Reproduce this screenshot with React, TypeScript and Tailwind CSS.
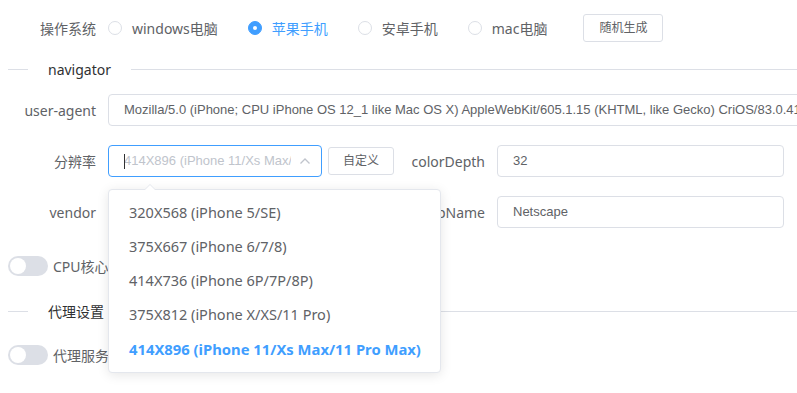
import React from "react";

const font = { fontFamily: '"Noto Sans", "Noto Sans CJK SC", sans-serif' };
const inputFont = { fontFamily: '"Liberation Sans", "Noto Sans CJK SC", sans-serif' };

function Radio({ label, checked }: { label: string; checked?: boolean }) {
  return (
    <label className="flex items-center mr-[30px] cursor-pointer">
      {checked ? (
        <span className="w-[14px] h-[14px] rounded-full bg-[#409eff] border border-[#409eff] flex items-center justify-center">
          <span className="w-[4px] h-[4px] rounded-full bg-white" />
        </span>
      ) : (
        <span className="w-[14px] h-[14px] rounded-full bg-white border border-[#dcdfe6]" />
      )}
      <span className={`ml-[10px] text-[14px] ${checked ? "text-[#409eff]" : "text-[#606266]"}`}>{label}</span>
    </label>
  );
}

function Divider({ title }: { title: string }) {
  return (
    <div className="flex items-center h-[20px]">
      <div className="w-[20px] h-px bg-[#dcdfe6]" />
      <span className="px-[20px] text-[14px] text-[#303133]">{title}</span>
      <div className="flex-1 h-px bg-[#dcdfe6]" />
    </div>
  );
}

function Switch({ label }: { label: string }) {
  return (
    <div className="flex items-center h-[32px]">
      <span className="relative w-[40px] h-[20px] rounded-full bg-[#dcdfe6]">
        <span className="absolute left-[2px] top-[2px] w-[16px] h-[16px] rounded-full bg-white" />
      </span>
      <span className="ml-[5px] text-[14px] text-[#606266] whitespace-nowrap">{label}</span>
    </div>
  );
}

const Label = ({ children }: { children: React.ReactNode }) => (
  <div className="w-[100px] shrink-0 pr-[12px] text-right text-[14px] text-[#606266] whitespace-nowrap">{children}</div>
);

const resolutions = [
  "320X568 (iPhone 5/SE)",
  "375X667 (iPhone 6/7/8)",
  "414X736 (iPhone 6P/7P/8P)",
  "375X812 (iPhone X/XS/11 Pro)",
  "414X896 (iPhone 11/Xs Max/11 Pro Max)",
];

export default function App() {
  return (
    <div className="relative w-[797px] h-[393px] overflow-hidden bg-white pl-[8px]" style={font}>
      {/* 操作系统 */}
      <div className="flex items-center h-[28px] mt-[14px]">
        <Label>操作系统</Label>
        <Radio label="windows电脑" />
        <Radio label="苹果手机" checked />
        <Radio label="安卓手机" />
        <Radio label="mac电脑" />
        <button className="ml-[6px] h-[28px] w-[80px] border border-[#dcdfe6] rounded-[3px] text-[12px] text-[#606266] bg-white">
          随机生成
        </button>
      </div>

      <div className="mt-[17px]">
        <Divider title="navigator" />
      </div>

      {/* user-agent */}
      <div className="flex items-center mt-[15px] h-[32px]">
        <Label>user-agent</Label>
        <div
          className="w-[820px] shrink-0 h-[32px] border border-[#dcdfe6] rounded-[4px] px-[15px] flex items-center text-[13px] text-[#606266] whitespace-nowrap overflow-hidden"
          style={inputFont}
        >
          Mozilla/5.0 (iPhone; CPU iPhone OS 12_1 like Mac OS X) AppleWebKit/605.1.15 (KHTML, like Gecko) CriOS/83.0.4103.88 Mobile/15E148 Safari/604.1
        </div>
      </div>

      {/* 分辨率 / colorDepth */}
      <div className="flex items-center mt-[19px] h-[32px]">
        <div className="w-[389px] shrink-0 flex items-center">
          <Label>分辨率</Label>
          <div
            className="relative w-[214px] h-[32px] border border-[#409eff] rounded-[4px] pl-[15px] pr-[30px] flex items-center text-[13px] text-[#c0c4cc] whitespace-nowrap overflow-hidden"
            style={inputFont}
          >
            <span className="absolute left-[15px] top-[8px] w-px h-[15px] bg-[#303133]" />
            <span className="overflow-hidden">414X896 (iPhone 11/Xs Max/11 Pro Max)</span>
            <svg className="absolute right-[10px] top-[11px]" width="12" height="8" viewBox="0 0 12 8">
              <polyline points="1.5,6.5 6,2 10.5,6.5" fill="none" stroke="#c0c4cc" strokeWidth="1.3" />
            </svg>
          </div>
          <button className="ml-[6px] h-[28px] w-[66px] border border-[#dcdfe6] rounded-[3px] text-[12px] text-[#606266] bg-white">
            自定义
          </button>
        </div>
        <Label>colorDepth</Label>
        <div
          className="w-[287px] h-[32px] border border-[#dcdfe6] rounded-[4px] px-[15px] flex items-center text-[13px] text-[#606266]"
          style={inputFont}
        >
          32
        </div>
      </div>

      {/* vendor / appName */}
      <div className="flex items-center mt-[19px] h-[32px]">
        <div className="w-[389px] shrink-0 flex items-center">
          <Label>vendor</Label>
          <div
            className="w-[214px] h-[32px] border border-[#dcdfe6] rounded-[4px] px-[15px] flex items-center text-[13px] text-[#606266]"
            style={inputFont}
          >
            Apple Computer, Inc.
          </div>
        </div>
        <Label>appName</Label>
        <div
          className="w-[287px] h-[32px] border border-[#dcdfe6] rounded-[4px] px-[15px] flex items-center text-[13px] text-[#606266]"
          style={inputFont}
        >
          Netscape
        </div>
      </div>

      <div className="mt-[22px]">
        <Switch label="CPU核心数" />
      </div>

      <div className="mt-[19px]">
        <Divider title="代理设置" />
      </div>

      <div className="mt-[18px]">
        <Switch label="代理服务器" />
      </div>

      {/* select dropdown */}
      <div className="absolute left-[108px] top-[189px] w-[333px] bg-white border border-[#e4e7ed] rounded-[4px] shadow-[0_2px_12px_0_rgba(0,0,0,0.1)] py-[6px]">
        <span className="absolute left-[35px] -top-[6px] w-0 h-0 border-x-[6px] border-x-transparent border-b-[6px] border-b-[#e4e7ed]" />
        <span className="absolute left-[36px] -top-[5px] w-0 h-0 border-x-[5px] border-x-transparent border-b-[5px] border-b-white" />
        {resolutions.map((r, i) => {
          const selected = i === resolutions.length - 1;
          return (
            <div
              key={r}
              className={`h-[34px] flex items-center px-[20px] whitespace-nowrap ${
                selected ? "text-[#409eff] font-bold text-[14.8px]" : "text-[#606266] text-[14.5px]"
              }`}
            >
              {r}
            </div>
          );
        })}
      </div>
    </div>
  );
}
